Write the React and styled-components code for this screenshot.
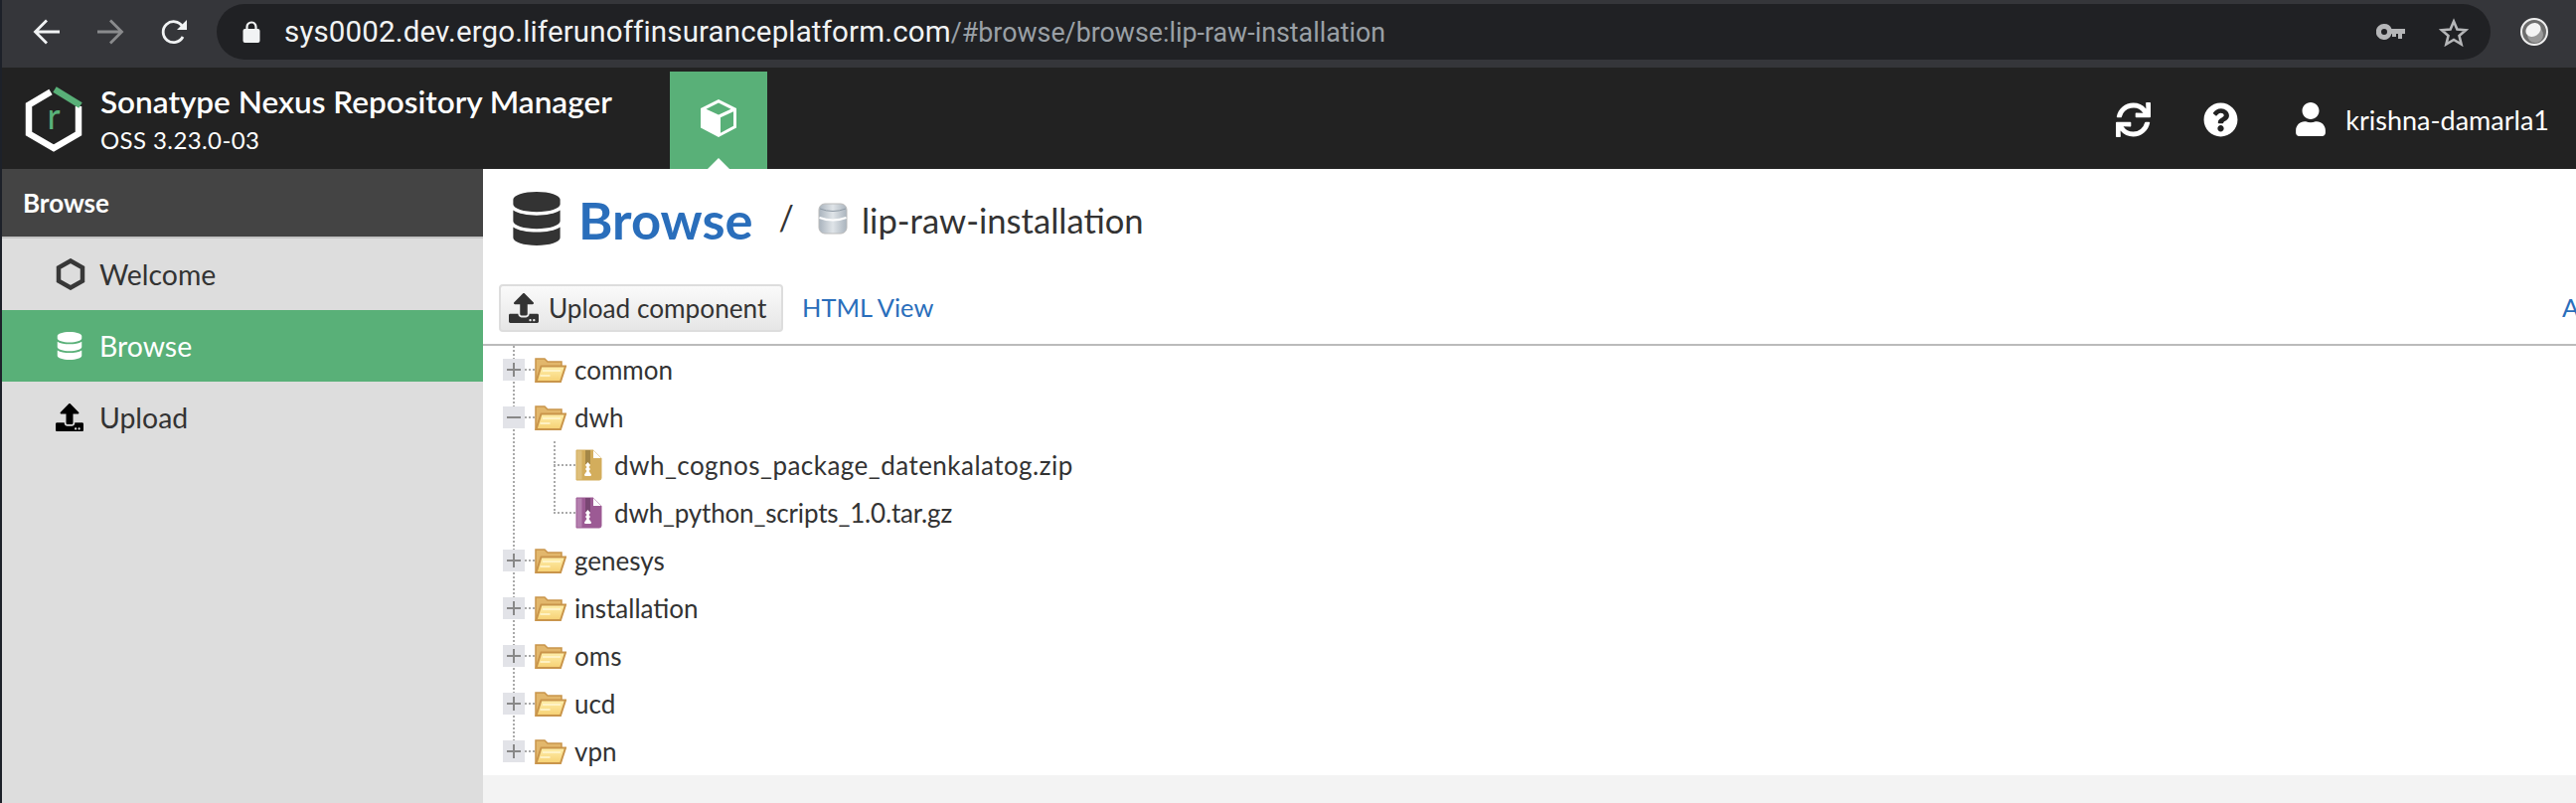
import React from "react";
import styled, { createGlobalStyle } from "styled-components";
import { FaDatabase, FaQuestionCircle, FaSync, FaUpload, FaUser } from "react-icons/fa";

const Global = createGlobalStyle`
  html, body { margin: 0; padding: 0; background: #fff; }
  body { font-family: Lato, "Open Sans", sans-serif; }
  * { box-sizing: border-box; }
`;

const Page = styled.div`
  width: 2592px;
  height: 808px;
  overflow: hidden;
  display: flex;
  flex-direction: column;
  border-left: 2px solid #1d2129;
`;

const ChromeBar = styled.div`
  height: 68px;
  flex: none;
  background: #35363a;
  display: flex;
  align-items: center;
  padding: 0 28px 4px 31px;
`;

const NavButton = styled.button`
  width: 28px;
  height: 28px;
  padding: 0;
  border: 0;
  background: none;
  color: ${(p) => (p.$dim ? "#8a8b8d" : "#f1f3f4")};
  margin-right: ${(p) => p.$gap}px;
  display: flex;
  svg { display: block; }
`;

const Omnibox = styled.div`
  width: 2288px;
  height: 56px;
  margin-left: -1px;
  border-radius: 28px;
  background: #202124;
  display: flex;
  align-items: center;
  padding: 0 22px 0 26px;
  font: 400 29.5px Roboto, sans-serif;
  letter-spacing: 0.15px;
  color: #f1f3f4;
`;

const Url = styled.span`
  flex: 1;
  margin-left: 24px;
  white-space: nowrap;
`;

const UrlPath = styled.span`
  color: #9aa0a6;
  font-size: 26.8px;
  letter-spacing: 0;
`;

const OmniAction = styled.span`
  display: flex;
  margin-left: ${(p) => p.$gap || 0}px;
  color: #b5b6b8;
`;

const Avatar = styled.span`
  display: flex;
  margin-left: 30px;
`;

const Header = styled.header`
  height: 102px;
  flex: none;
  background: #222;
  display: flex;
  align-items: stretch;
  color: #fff;
`;

const Logo = styled.svg`
  width: 58px;
  height: 66px;
  margin: 19px 18px 0 23px;
  flex: none;
`;

const Brand = styled.div`
  width: 573px;
  padding-top: 16px;
`;

const BrandName = styled.div`
  font-size: 31.5px;
  font-weight: 600;
  line-height: 36px;
  white-space: nowrap;
`;

const BrandVersion = styled.div`
  font-size: 24px;
  line-height: 30px;
  margin-top: 6px;
  letter-spacing: 0.4px;
`;

const ActiveTab = styled.div`
  width: 98px;
  margin-top: 4px;
  background: #59b078;
  position: relative;
  display: flex;
  justify-content: center;
  padding-top: 28px;
  &::after {
    content: "";
    position: absolute;
    left: 38px;
    bottom: 0;
    border: 11px solid transparent;
    border-top: 0;
    border-bottom-color: #fff;
  }
`;

const HeaderActions = styled.div`
  margin-left: auto;
  display: flex;
  align-items: center;
  padding: 2px 27px 0 0;
  font-size: 27px;
  white-space: nowrap;
`;

const HeaderIcon = styled.span`
  display: flex;
  font-size: ${(p) => p.$size}px;
  margin-right: ${(p) => p.$gap}px;
`;

const Body = styled.div`
  flex: 1;
  display: flex;
  min-height: 0;
`;

const Sidebar = styled.nav`
  width: 484px;
  flex: none;
  background: #ddd;
`;

const SidebarTitle = styled.div`
  height: 70px;
  background: #444;
  border-bottom: 2px solid #c4c4c4;
  color: #fff;
  font-size: 26px;
  font-weight: 700;
  display: flex;
  align-items: center;
  padding-left: 21px;
`;

const NavItem = styled.div`
  height: 72px;
  display: flex;
  align-items: center;
  font-size: 28.4px;
  background: ${(p) => (p.$active ? "#59b078" : "transparent")};
  color: ${(p) => (p.$active ? "#fff" : "#333")};
`;

const NavIcon = styled.span`
  width: 98px;
  padding-left: 54px;
  display: flex;
  font-size: 28px;
  color: ${(p) => p.$color || "inherit"};
`;

const Main = styled.main`
  flex: 1;
  display: flex;
  flex-direction: column;
  background: #f3f3f3;
  min-width: 0;
`;

const TitleBar = styled.div`
  height: 116px;
  background: #fff;
  display: flex;
  align-items: center;
  padding: 0 0 16px 27px;
  color: #333;
`;

const TitleIcon = styled.span`
  display: flex;
  font-size: 54px;
  margin-right: 15px;
`;

const TitleText = styled.h1`
  margin: 0;
  font-size: 52.5px;
  font-weight: 700;
  color: #2a6ebb;
`;

const Slash = styled.span`
  font-size: 34px;
  margin: -4px 24px 0 26px;
`;

const RepoName = styled.span`
  margin: 3px 0 0 14px;
  font-size: 34.6px;
  white-space: nowrap;
`;

const Toolbar = styled.div`
  height: 62px;
  background: #fff;
  border-bottom: 2px solid #bbb;
  display: flex;
  align-items: flex-start;
  padding-left: 16px;
  overflow: hidden;
`;

const UploadButton = styled.button`
  width: 286px;
  height: 48px;
  border: 2px solid #ddd;
  border-radius: 4px;
  background: linear-gradient(#fafafa, #e6e6e6);
  display: flex;
  align-items: center;
  gap: 10px;
  padding: 0 0 0 8px;
  font: 400 26.2px Lato, sans-serif;
  color: #333;
  white-space: nowrap;
  svg { font-size: 30px; flex: none; }
`;

const ToolLink = styled.a`
  color: #2a6ebb;
  font-size: 25.4px;
  line-height: 46px;
  white-space: nowrap;
  margin-left: ${(p) => p.$left || 0}px;
`;

const ClippedLink = styled(ToolLink)`
  margin-left: auto;
  width: 14px;
  overflow: hidden;
`;

const Tree = styled.div`
  background: #fff;
  padding-left: 20px;
  color: #333;
  font-size: 26px;
`;

const Row = styled.div`
  height: 48px;
  display: flex;
  align-items: center;
  white-space: nowrap;
`;

const dots = "repeating-linear-gradient(to bottom, #aaa 0 2px, transparent 2px 4px)";
const hdots = "repeating-linear-gradient(to right, #aaa 0 2px, transparent 2px 4px)";

const Elbow = styled.span`
  width: 22px;
  height: 48px;
  flex: none;
  display: flex;
  align-items: center;
  background: ${dots} center top / 2px ${(p) => (p.$last ? "50%" : "100%")} no-repeat;
`;

const Expander = styled.span`
  width: 22px;
  height: 22px;
  background: #e2e3e8;
  position: relative;
  &::before, &::after {
    content: "";
    position: absolute;
    background: #888;
  }
  &::before { left: 4px; right: 4px; top: 10px; height: 2px; }
  &::after {
    display: ${(p) => (p.$open ? "none" : "block")};
    top: 4px; bottom: 4px; left: 10px; width: 2px;
  }
`;

const Connector = styled.span`
  width: 10px;
  height: 2px;
  flex: none;
  background: ${hdots};
`;

const ChildIndent = styled.span`
  width: 29px;
  flex: none;
`;

const ChildElbow = styled.span`
  width: 22px;
  height: 48px;
  flex: none;
  background: ${hdots} left center / 100% 2px no-repeat,
    ${dots} left top / 2px ${(p) => (p.$last ? "50%" : "100%")} no-repeat;
`;

const NodeLabel = styled.span`
  margin-left: ${(p) => p.$gap}px;
  letter-spacing: ${(p) => p.$spacing || 0}px;
`;

const Footer = styled.div`
  flex: 1;
  background: #f3f3f3;
`;

const ToolIcon = styled.svg`
  display: block;
  flex: none;
`;

const Back = () => (
  <ToolIcon width="28" height="28" viewBox="0 0 28 28" fill="none" stroke="currentColor" strokeWidth="2.8">
    <path d="M27 14H3M14 2.5 2.5 14 14 25.5" />
  </ToolIcon>
);
const Forward = () => (
  <ToolIcon width="28" height="28" viewBox="0 0 28 28" fill="none" stroke="currentColor" strokeWidth="2.8">
    <path d="M1 14h24M14 2.5 25.5 14 14 25.5" />
  </ToolIcon>
);
const Reload = () => (
  <ToolIcon width="28" height="28" viewBox="0 0 28 28" fill="none">
    <path d="M23 19a10.5 10.5 0 1 1-.5-10.5" stroke="currentColor" strokeWidth="2.8" />
    <path d="M27 2v10h-10z" fill="currentColor" />
  </ToolIcon>
);
const Lock = () => (
  <ToolIcon width="18" height="22" viewBox="0 0 18 22" fill="none">
    <path d="M4.5 9V6a4.5 4.5 0 0 1 9 0v3" stroke="#f1f3f4" strokeWidth="2.2" />
    <rect x="0.5" y="8" width="17" height="14" rx="2" fill="#f1f3f4" />
  </ToolIcon>
);
const Key = () => (
  <ToolIcon width="29" height="16" viewBox="0 0 29 16">
    <path fillRule="evenodd" fill="currentColor" d="M8 0a8 8 0 0 1 7.5 5H29v5h-3v5h-4v-5h-2v3h-4v-3h-.5A8 8 0 1 1 8 0Zm0 5a3 3 0 1 0 0 6 3 3 0 0 0 0-6Z" />
  </ToolIcon>
);
const Star = () => (
  <ToolIcon width="30" height="29" viewBox="0 0 30 29" fill="none" stroke="currentColor" strokeWidth="2.6">
    <path d="M15 3.5 18.4 11.6 27.2 12.3 20.5 18 22.6 26.5 15 22 7.4 26.5 9.5 18 2.8 12.3 11.6 11.6Z" />
  </ToolIcon>
);
const Profile = () => (
  <ToolIcon width="28" height="28" viewBox="0 0 28 28">
    <circle cx="14" cy="14" r="13" fill="#6d6d6d" stroke="#eee" strokeWidth="2" />
    <circle cx="15" cy="17" r="8" fill="#9a9a9a" />
    <ellipse cx="13" cy="12" rx="8" ry="6.5" fill="#f4f4f4" transform="rotate(-35 13 12)" />
  </ToolIcon>
);
const NexusLogo = () => (
  <Logo viewBox="0 0 58 66" fill="none">
    <path d="M26 5.5 4 18.5v29L29 62l25-14.5V20" stroke="#fff" strokeWidth="6.5" />
    <path d="M30 3 56 19" stroke="#59b078" strokeWidth="6.5" />
    <text x="29" y="43" textAnchor="middle" fontFamily="Lato, sans-serif" fontSize="36" fontWeight="400" fill="#59b078">r</text>
  </Logo>
);
const Cube = () => (
  <ToolIcon width="38" height="38" viewBox="0 0 38 38">
    <path fill="#fff" fillRule="evenodd" d="M19 0 37 9v19.5L19 38 1 28.5V9ZM19 3.5 6.5 9.8 19 15.5 31.5 9.8ZM21 18.3V33.7L34 26.8V12.3Z" />
  </ToolIcon>
);
const HexIcon = () => (
  <ToolIcon width="30" height="32" viewBox="0 0 30 32" fill="none">
    <path d="M15 2.5 27 9.2v13.6L15 29.5 3 22.8V9.2Z" stroke="#383838" strokeWidth="4.5" />
  </ToolIcon>
);
const RepoIcon = () => (
  <ToolIcon width="30" height="32" viewBox="0 0 30 32">
    <defs>
      <linearGradient id="repoFill" x1="0" y1="0" x2="1" y2="0">
        <stop offset="0" stopColor="#a9b3bd" />
        <stop offset="0.5" stopColor="#dfe4e8" />
        <stop offset="1" stopColor="#aab4be" />
      </linearGradient>
    </defs>
    <rect x="1" y="1" width="28" height="30" rx="6" fill="url(#repoFill)" stroke="#bbb" />
    <path d="M1.5 15q13.5 5 27 0" fill="none" stroke="#fff" strokeWidth="2" />
    <path d="M2 6q13 5 26 0" fill="none" stroke="#8e99a4" strokeWidth="1" />
  </ToolIcon>
);
const Folder = () => (
  <ToolIcon width="32" height="25" viewBox="0 0 32 25">
    <defs>
      <linearGradient id="folderFront" x1="0" y1="0" x2="0" y2="1">
        <stop offset="0" stopColor="#fff0ad" />
        <stop offset="1" stopColor="#f6d072" />
      </linearGradient>
    </defs>
    <path d="M1 3V1h9l3 3h14v5H7L2 24H1Z" fill="#e2b76c" stroke="#c9954b" strokeWidth="1.5" />
    <path d="M6.5 8.5H31L26 24H1.5Z" fill="url(#folderFront)" stroke="#c9954b" strokeWidth="2" />
    <path d="M8 13h18M5.5 18h10" stroke="#fff8d5" strokeWidth="1.5" />
  </ToolIcon>
);
const ZipFile = ({ color, light }) => (
  <ToolIcon width="27" height="32" viewBox="0 0 27 32">
    <path d="M1 1h17l8 8v20a2 2 0 0 1-2 2H1Z" fill={color} stroke={color} />
    <path d="M18 1v8h8Z" fill="#fff" />
    <rect x="1.5" y="1.5" width="5" height="29" fill={light} opacity=".35" />
    <rect x="10" y="1" width="5" height="14" fill="#000" opacity=".22" />
    <path d="M12.5 13l2.5 3-1.5 2 1.5 2-1.5 2 2.5 3.5-.5 1.500h-6l-.5-1.500 2.500-3.500-1.500-2 1.500-2-1.500-2Z" fill="#fff" />
  </ToolIcon>
);

const nodes = [
  { name: "common" },
  { name: "dwh", open: true },
  { name: "dwh_cognos_package_datenkalatog.zip", file: "#d3ad5c", light: "#f4e3b5", spacing: 0.47 },
  { name: "dwh_python_scripts_1.0.tar.gz", file: "#9c5a94", light: "#e3c5df", last: true, spacing: -0.17 },
  { name: "genesys" },
  { name: "installation" },
  { name: "oms" },
  { name: "ucd" },
  { name: "vpn", end: true },
];

export default function App() {
  return (
    <Page>
      <Global />
      <ChromeBar>
        <NavButton $gap={36}><Back /></NavButton>
        <NavButton $gap={36} $dim><Forward /></NavButton>
        <NavButton $gap={30}><Reload /></NavButton>
        <Omnibox>
          <Lock />
          <Url>
            sys0002.dev.ergo.liferunoffinsuranceplatform.com
            <UrlPath>/#browse/browse:lip-raw-installation</UrlPath>
          </Url>
          <OmniAction><Key /></OmniAction>
          <OmniAction $gap={34}><Star /></OmniAction>
        </Omnibox>
        <Avatar><Profile /></Avatar>
      </ChromeBar>
      <Header>
        <NexusLogo />
        <Brand>
          <BrandName>Sonatype Nexus Repository Manager</BrandName>
          <BrandVersion>OSS 3.23.0-03</BrandVersion>
        </Brand>
        <ActiveTab><Cube /></ActiveTab>
        <HeaderActions>
          <HeaderIcon $size={35} $gap={53}><FaSync /></HeaderIcon>
          <HeaderIcon $size={35} $gap={56}><FaQuestionCircle /></HeaderIcon>
          <HeaderIcon $size={34} $gap={18}><FaUser /></HeaderIcon>
          krishna-damarla1
        </HeaderActions>
      </Header>
      <Body>
        <Sidebar>
          <SidebarTitle>Browse</SidebarTitle>
          <NavItem><NavIcon><HexIcon /></NavIcon>Welcome</NavItem>
          <NavItem $active><NavIcon><FaDatabase /></NavIcon>Browse</NavItem>
          <NavItem><NavIcon $color="#000"><FaUpload /></NavIcon>Upload</NavItem>
        </Sidebar>
        <Main>
          <TitleBar>
            <TitleIcon><FaDatabase /></TitleIcon>
            <TitleText>Browse</TitleText>
            <Slash>/</Slash>
            <RepoIcon />
            <RepoName>lip-raw-installation</RepoName>
          </TitleBar>
          <Toolbar>
            <UploadButton><FaUpload />Upload component</UploadButton>
            <ToolLink $left={19}>HTML View</ToolLink>
            <ClippedLink>Advanced search</ClippedLink>
          </Toolbar>
          <Tree>
            {nodes.map((n) => (
              <Row key={n.name}>
                {n.file ? (
                  <>
                    <Elbow />
                    <ChildIndent />
                    <ChildElbow $last={n.last} />
                    <ZipFile color={n.file} light={n.light} />
                    <NodeLabel $gap={12} $spacing={n.spacing}>{n.name}</NodeLabel>
                  </>
                ) : (
                  <>
                    <Elbow $last={n.end}><Expander $open={n.open} /></Elbow>
                    <Connector />
                    <Folder />
                    <NodeLabel $gap={8}>{n.name}</NodeLabel>
                  </>
                )}
              </Row>
            ))}
          </Tree>
          <Footer />
        </Main>
      </Body>
    </Page>
  );
}
